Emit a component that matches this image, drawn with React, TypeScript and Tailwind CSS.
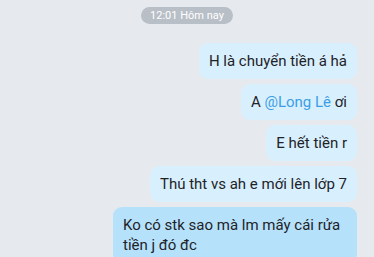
import React from "react";

const Bubble = ({ children, dark }: { children: React.ReactNode; dark?: boolean }) => (
  <div
    className={`${dark ? "bg-[#b5e1fb]" : "bg-[#d8f0fd]"} rounded-[9px] px-[10px] py-[8px] text-[15px] leading-[20px] text-[#1f2328] max-w-[244px]`}
  >
    {children}
  </div>
);

export default function App() {
  return (
    <div
      className="w-[374px] h-[257px] overflow-hidden bg-[#e6eaef]"
      style={{ fontFamily: "Roboto, 'Noto Sans', sans-serif" }}
    >
      <div className="flex justify-center pt-[7px]">
        <div className="h-[17px] px-[9px] rounded-full bg-[#b9bfc7] text-white text-[11px] leading-[17px]">
          12:01 Hôm nay
        </div>
      </div>
      <div className="flex flex-col items-end gap-[5px] pr-[17px] pt-[19px]">
        <Bubble>H là chuyển tiền á hả</Bubble>
        <Bubble>
          A <span className="text-[#3b9ee6]">@Long Lê</span> ơi
        </Bubble>
        <Bubble>E hết tiền r</Bubble>
        <Bubble>Thú tht vs ah e mới lên lớp 7</Bubble>
        <Bubble dark>Ko có stk sao mà lm mấy cái rửa tiền j đó đc</Bubble>
      </div>
    </div>
  );
}
